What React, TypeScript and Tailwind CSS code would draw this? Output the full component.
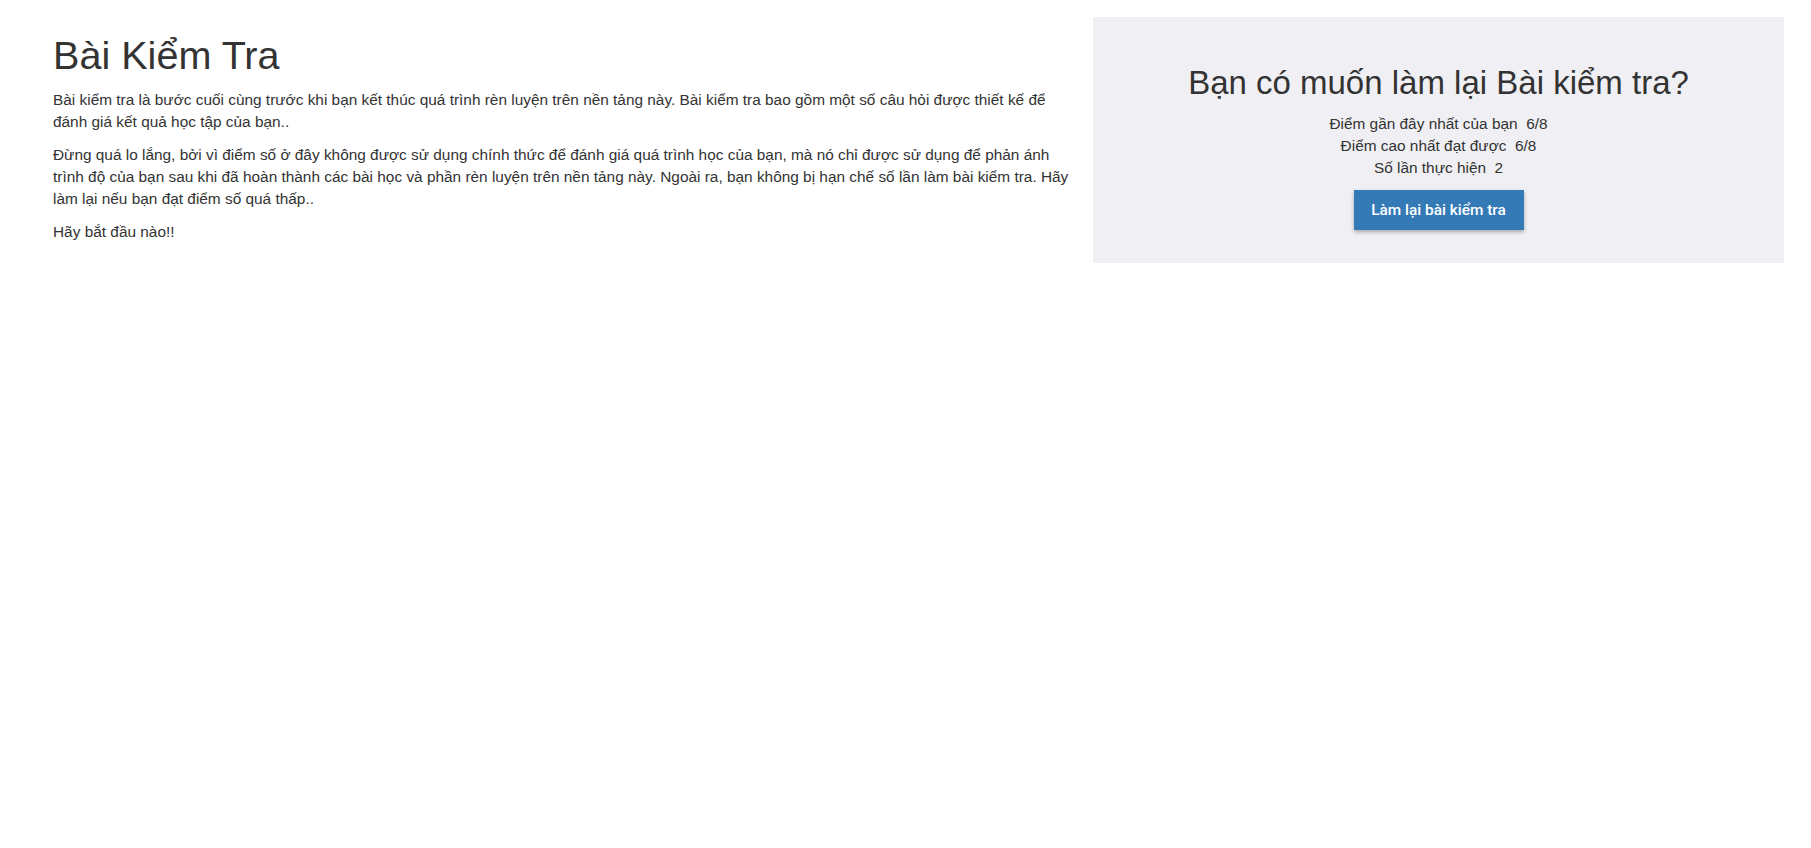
import React from "react";

const stats = [
  { label: "Điểm gần đây nhất của bạn", value: "6/8" },
  { label: "Điểm cao nhất đạt được", value: "6/8" },
  { label: "Số lần thực hiện", value: "2" },
];

export default function App() {
  return (
    <div className="flex min-h-screen bg-white pt-[17px] pl-[53px] pr-[27px] font-['Liberation_Sans',Arial,sans-serif] text-[15.4px] leading-[22px] text-[#333]">
      {/* intro column */}
      <div className="mr-[16px] w-[1024px] shrink-0">
        <h1 className="mt-[17px] mb-[11px] text-[39.6px] leading-[1.1]">Bài Kiểm Tra</h1>
        <p className="mb-[11px]">
          Bài kiểm tra là bước cuối cùng trước khi bạn kết thúc quá trình rèn luyện trên nền tảng này. Bài kiểm tra bao gồm một số câu hỏi được thiết kế để đánh giá kết quả học tập của bạn..
        </p>
        <p className="mb-[11px]">
          Đừng quá lo lắng, bởi vì điểm số ở đây không được sử dụng chính thức để đánh giá quá trình học của bạn, mà nó chỉ được sử dụng để phản ánh trình độ của bạn sau khi đã hoàn thành các bài học và phần rèn luyện trên nền tảng này. Ngoài ra, bạn không bị hạn chế số lần làm bài kiểm tra. Hãy làm lại nếu bạn đạt điểm số quá thấp..
        </p>
        <p className="mb-[11px]">Hãy bắt đầu nào!!</p>
      </div>

      {/* retake panel */}
      <div className="flex h-fit flex-1 flex-col items-center bg-[#f0f0f4] pt-[48.4px] pb-[33px] text-center">
        <h2 className="mb-[11px] text-[33px] leading-[36.3px]">Bạn có muốn làm lại Bài kiểm tra?</h2>
        {stats.map((s) => (
          <div key={s.label} className="whitespace-pre">
            {s.label}
            {"  "}
            {s.value}
          </div>
        ))}
        <button className="mt-[11.3px] h-[40px] w-[170px] bg-[#337ab7] font-['Roboto',sans-serif] text-[15.4px] font-medium text-white shadow-[0_2px_4px_rgba(0,0,0,0.3)]">
          Làm lại bài kiểm tra
        </button>
      </div>
    </div>
  );
}
